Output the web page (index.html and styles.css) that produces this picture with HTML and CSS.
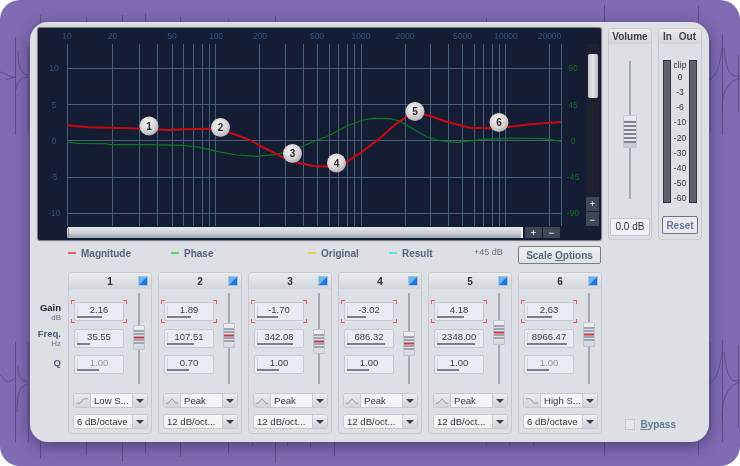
FILE: index.html
```html
<!DOCTYPE html>
<html lang="en">
<head>
<meta charset="utf-8">
<title>Parametric EQ</title>
<link rel="stylesheet" href="styles.css">
</head>
<body>
<div class="stage">
  <svg class="wave" viewBox="0 0 740 466" aria-hidden="true">
    <g fill="none" stroke="#55487f" stroke-width=".8">
      <path d="M15.500 37V135M28.500 47V135M0 72C6 73 10 78 15 77M5 80L15 77M18 50C18 66 20 74 28 75M16 90C17 82 20 78 28 77"/>
      <path d="M15.500 342V442M28.500 342V442M0 375C4 378 6 386 15 378M18 366C18 376 20 380 28 382M17 412C17 392 20 386 28 384"/>
      <path d="M710.500 40V132M722.500 35V135M738.500 55V112M709 80C716 76 719 70 722 48M724 48C726 70 730 78 740 76M722 112C722 90 728 82 740 78"/>
      <path d="M710.500 342V430M722.500 340V442M738.500 345V428M709 383C716 380 719 372 722 352M724 352C726 372 730 381 735 381C737 381 738 380 740 380M722 420C722 396 728 386 740 382"/>
      <path d="M40.500 15V22M86.500 17V22M122.500 15V22M145.500 13V22M180.500 17V22M228.500 19V22M275.500 16V22M486.500 18V22M604.500 5V22M698.500 6V22"/>
      <path d="M40.500 442V458M86.500 442V455M122.500 442V461M145.500 442V453M180.500 442V457M228.500 442V453M252.500 442V446M275.500 442V463M287.500 442V446M310.500 442V447M334.500 442V456M486.500 442V445M509.500 442V445M533.500 442V445M604.500 442V456M698.500 442V455"/>
    </g>
  </svg>
  <main class="panel">
    <div class="top">
      <svg class="graph" viewBox="38 28 563 212" role="img">
        <g class="grid">
          <path d="M67.500 44V226M112.500 44V226M139.500 44V226M157.500 44V226M172.500 44V226M183.500 44V226M193.500 44V226M202.500 44V226M209.500 44V226M215.500 44V226M259.500 44V226M285.500 44V226M303.500 44V226M317.500 44V226M329.500 44V226M338.500 44V226M347.500 44V226M354.500 44V226M361.500 44V226M405.500 44V226M430.500 44V226M448.500 44V226M462.500 44V226M474.500 44V226M483.500 44V226M492.500 44V226M499.500 44V226M505.500 44V226M549.500 44V226M561.500 44V226"/>
          <path d="M67 68.500H561M67 104.500H561M67 140.500H561M67 177.500H561M67 213.500H561"/>
        </g>
        <g class="axis-top">
          <text x="67" y="39">10</text><text x="112.500" y="39">20</text><text x="172" y="39">50</text><text x="216" y="39">100</text><text x="260" y="39">200</text><text x="317" y="39">500</text><text x="361" y="39">1000</text><text x="405" y="39">2000</text><text x="462.500" y="39">5000</text><text x="506" y="39">10000</text><text x="549.500" y="39">20000</text>
        </g>
        <g class="axis-left">
          <text x="54" y="71">10</text><text x="54" y="108">5</text><text x="54" y="144">0</text><text x="54" y="180">-5</text><text x="54" y="216">-10</text>
        </g>
        <g class="axis-right">
          <text x="573" y="71">90</text><text x="573" y="108">45</text><text x="573" y="144">0</text><text x="573" y="180">-45</text><text x="573" y="216">-90</text>
        </g>
        <path class="phase" d="M67.300 142L76.700 143.300L105 143.700L110 144.700L150 144.700L183.300 145.300L200 147.300L216.700 151.300L236.700 155L256.700 156.300L276.700 154.300L293.300 150L313.300 141.700L330 135L346.700 126L363.300 120L373.300 118.300L390 118.700L400 121L410 127.300L426.700 136.700L440 140.700L456.700 142.300L483.300 139.300L513.300 138L543.300 138.700L561.300 141.300"/>
        <path class="magnitude" d="M67.300 125.300L88.300 127.300L110 127.700L130 128.300L149.300 129.300L170 130L183.300 129.300L210 128.700L230 132.700L250 140L256.700 144L283.300 157.300L300 163.300L313.300 166L330 166.700L336.700 163.300L346.700 161.700L360 153.300L376.700 140.700L396.700 123.300L415 111.700L430 116L446.700 121.700L470 127.700L490 128.300L510 126.700L530 124.300L561.300 122"/>
        <defs>
          <radialGradient id="ball" cx=".42" cy=".34" r=".75">
            <stop offset="0" stop-color="#f4f2f2"/><stop offset=".5" stop-color="#dcd8d9"/><stop offset=".8" stop-color="#c2bcbe"/><stop offset="1" stop-color="#8e888c"/>
          </radialGradient>
          <linearGradient id="thumbH" x1="0" y1="0" x2="0" y2="1">
            <stop offset="0" stop-color="#e6e8eb"/><stop offset=".5" stop-color="#cdd1d6"/><stop offset="1" stop-color="#9ea3ab"/>
          </linearGradient>
          <linearGradient id="thumbV" x1="0" y1="0" x2="1" y2="0">
            <stop offset="0" stop-color="#c6cad0"/><stop offset=".5" stop-color="#e4e6ea"/><stop offset="1" stop-color="#b4b8be"/>
          </linearGradient>
        </defs>
        <g class="nodes">
          <circle cx="149" cy="126" r="9.500"/><text x="149" y="129.500">1</text>
          <circle cx="220.500" cy="127.500" r="9.500"/><text x="220.500" y="131">2</text>
          <circle cx="292.500" cy="153.500" r="9.500"/><text x="292.500" y="157">3</text>
          <circle cx="336.500" cy="163" r="9.500"/><text x="336.500" y="166.500">4</text>
          <circle cx="415" cy="111.500" r="9.500"/><text x="415" y="115">5</text>
          <circle cx="499" cy="122.500" r="9.500"/><text x="499" y="126">6</text>
        </g>
        <rect x="586" y="44" width="13" height="182" fill="#1e2230"/>
        <rect x="588" y="54" width="10" height="44" rx="2" fill="url(#thumbV)"/>
        <rect x="67" y="227" width="456" height="11" rx="1.500" fill="url(#thumbH)"/>
        <rect x="68" y="228" width="1" height="9" fill="#8a8f98"/>
        <rect x="521" y="227" width="2" height="11" fill="#eef0f2"/>
        <g class="mini">
          <rect x="525" y="227" width="17" height="11"/><rect x="543" y="227" width="17" height="11"/>
          <rect x="586" y="197" width="13" height="14"/><rect x="586" y="212" width="13" height="14"/>
          <text x="533.500" y="236">+</text><text x="551.500" y="236">−</text>
          <text x="592.500" y="207">+</text><text x="592.500" y="222.500">−</text>
        </g>
      </svg>
      <section class="side volume">
        <h2 class="side-head">Volume</h2>
        <div class="vol-slider"><span class="vol-thumb"></span></div>
        <div class="vol-value">0.0 dB</div>
      </section>
      <section class="side meters">
        <h2 class="side-head meter-head"><span>In</span><span>Out</span></h2>
        <div class="meter-body">
          <span class="meter"></span>
          <div class="ticks"><span>clip</span><span>0</span><span>-3</span><span>-6</span><span>-10</span><span>-20</span><span>-30</span><span>-40</span><span>-50</span><span>-60</span></div>
          <span class="meter"></span>
        </div>
        <button class="reset">Reset</button>
      </section>
    </div>

    <div class="legend">
      <span class="key key-mag">Magnitude</span>
      <span class="key key-pha">Phase</span>
      <span class="key key-ori">Original</span>
      <span class="key key-res">Result</span>
      <span class="db">+45 dB</span>
      <button class="scale">Scale <u>O</u>ptions</button>
    </div>

    <div class="bottom">
      <div class="labels">
        <b class="lab-gain">Gain</b><small>dB</small>
        <b class="lab-freq">Freq.</b><small>Hz</small>
        <b class="lab-q">Q</b>
      </div>
      <div class="bands">
        <article class="band">
          <header class="band-head"><span>1</span><i class="led"></i></header>
          <div class="band-body">
            <div class="fields">
              <div class="field gain"><span>2.16</span><i style="width:25px"></i></div>
              <div class="field"><span>35.55</span><i style="width:13px"></i></div>
              <div class="field off"><span>1.00</span><i style="width:22px"></i></div>
            </div>
            <div class="slider"><span class="thumb" style="margin-top:32px"></span></div>
          </div>
          <div class="drop"><span class="shape"><svg viewBox="0 0 16 10"><path d="M2 8H6L10 3H15"/></svg></span><span class="val">Low S...</span><span class="arrow"></span></div>
          <div class="drop"><span class="val">6 dB/octave</span><span class="arrow"></span></div>
        </article>
        <article class="band">
          <header class="band-head"><span>2</span><i class="led"></i></header>
          <div class="band-body">
            <div class="fields">
              <div class="field gain"><span>1.89</span><i style="width:24px"></i></div>
              <div class="field"><span>107.51</span><i style="width:27px"></i></div>
              <div class="field"><span>0.70</span><i style="width:22px"></i></div>
            </div>
            <div class="slider"><span class="thumb" style="margin-top:30px"></span></div>
          </div>
          <div class="drop"><span class="shape"><svg viewBox="0 0 16 10"><path d="M1 8H4L8 3L12 8H15"/></svg></span><span class="val">Peak</span><span class="arrow"></span></div>
          <div class="drop"><span class="val">12 dB/oct...</span><span class="arrow"></span></div>
        </article>
        <article class="band">
          <header class="band-head"><span>3</span><i class="led"></i></header>
          <div class="band-body">
            <div class="fields">
              <div class="field gain"><span>-1.70</span><i style="width:21px"></i></div>
              <div class="field"><span>342.08</span><i style="width:36px"></i></div>
              <div class="field"><span>1.00</span><i style="width:22px"></i></div>
            </div>
            <div class="slider"><span class="thumb" style="margin-top:36px"></span></div>
          </div>
          <div class="drop"><span class="shape"><svg viewBox="0 0 16 10"><path d="M1 8H4L8 3L12 8H15"/></svg></span><span class="val">Peak</span><span class="arrow"></span></div>
          <div class="drop"><span class="val">12 dB/oct...</span><span class="arrow"></span></div>
        </article>
        <article class="band">
          <header class="band-head"><span>4</span><i class="led"></i></header>
          <div class="band-body">
            <div class="fields">
              <div class="field gain"><span>-3.02</span><i style="width:19px"></i></div>
              <div class="field"><span>686.32</span><i style="width:38px"></i></div>
              <div class="field"><span>1.00</span><i style="width:22px"></i></div>
            </div>
            <div class="slider"><span class="thumb" style="margin-top:38px"></span></div>
          </div>
          <div class="drop"><span class="shape"><svg viewBox="0 0 16 10"><path d="M1 8H4L8 3L12 8H15"/></svg></span><span class="val">Peak</span><span class="arrow"></span></div>
          <div class="drop"><span class="val">12 dB/oct...</span><span class="arrow"></span></div>
        </article>
        <article class="band">
          <header class="band-head"><span>5</span><i class="led"></i></header>
          <div class="band-body">
            <div class="fields">
              <div class="field gain"><span>4.18</span><i style="width:27px"></i></div>
              <div class="field"><span>2348.00</span><i style="width:38px"></i></div>
              <div class="field"><span>1.00</span><i style="width:22px"></i></div>
            </div>
            <div class="slider"><span class="thumb" style="margin-top:27px"></span></div>
          </div>
          <div class="drop"><span class="shape"><svg viewBox="0 0 16 10"><path d="M1 8H4L8 3L12 8H15"/></svg></span><span class="val">Peak</span><span class="arrow"></span></div>
          <div class="drop"><span class="val">12 dB/oct...</span><span class="arrow"></span></div>
        </article>
        <article class="band">
          <header class="band-head"><span>6</span><i class="led"></i></header>
          <div class="band-body">
            <div class="fields">
              <div class="field gain"><span>2.63</span><i style="width:25px"></i></div>
              <div class="field"><span>8966.47</span><i style="width:40px"></i></div>
              <div class="field off"><span>1.00</span><i style="width:22px"></i></div>
            </div>
            <div class="slider"><span class="thumb" style="margin-top:29px"></span></div>
          </div>
          <div class="drop"><span class="shape"><svg viewBox="0 0 16 10"><path d="M1 3H6L10 8H15"/></svg></span><span class="val">High S...</span><span class="arrow"></span></div>
          <div class="drop"><span class="val">6 dB/octave</span><span class="arrow"></span></div>
        </article>
      </div>
      <label class="bypass"><span class="check"></span><span><u>B</u>ypass</span></label>
    </div>
  </main>
</div>
</body>
</html>
```
FILE: styles.css
```css
* { box-sizing: border-box; }
html, body { margin: 0; padding: 0; background: #fff; }
body { width: 740px; height: 466px; overflow: hidden; font-family: "Liberation Sans", Arial, sans-serif; }
.stage { position: relative; width: 740px; height: 466px; padding: 22px 31px 24px 30px; background: #7f6cb2; border-radius: 20px; filter: blur(.35px); }
.wave { position: absolute; left: 0; top: 0; width: 740px; height: 466px; }
.panel { position: relative; width: 679px; height: 420px; padding: 6px 7px 0 8px; background: #dcdfe4; border-radius: 18px; box-shadow: 0 4px 16px rgba(45,35,85,.6); }

.top { display: flex; align-items: flex-start; }
.graph { display: block; width: 563px; height: 212px; background: #141d33; border-radius: 2px; box-shadow: 0 0 1px 1px #6d717a; flex: none; }
.grid path { stroke: #46607c; stroke-width: 1; fill: none; }
.axis-top text, .axis-left text, .axis-right text { font-size: 8.500px; }
.axis-top text { fill: #34527a; text-anchor: middle; }
.axis-left text { fill: #34527a; text-anchor: middle; }
.axis-right text { fill: #0e6e1e; text-anchor: middle; }
.phase { fill: none; stroke: #0a7a1e; stroke-width: 1.200; }
.magnitude { fill: none; stroke: #c80a10; stroke-width: 2; stroke-linejoin: round; }
.nodes circle { fill: url(#ball); }
.nodes text { font-size: 10px; font-weight: 700; fill: #2a2a2e; text-anchor: middle; }
.mini rect { fill: #3f4658; }
.mini text { font-size: 9px; font-weight: 700; fill: #d8dbe0; text-anchor: middle; }

.side { flex: none; width: 44px; height: 212px; margin-left: 7px; border: 1px solid #c6cad0; border-radius: 4px; display: flex; flex-direction: column; align-items: center; }
.meters { margin-left: 6px; }
.side-head { width: 100%; height: 15px; margin: 0; background: linear-gradient(#e9ebee, #d2d5da); border-radius: 3px 3px 0 0; font-size: 10px; line-height: 15px; font-weight: 700; color: #3c3f46; text-align: center; }
.meter-head { display: flex; justify-content: space-between; padding: 0 5px 0 4px; }
.vol-slider { position: relative; width: 2px; height: 138px; margin-top: 17px; background: #a4a9b3; }
.vol-thumb { position: absolute; left: -6px; top: 54px; width: 14px; height: 33px; border: 1px solid #c2c6ce; border-radius: 1px; background: repeating-linear-gradient(#7b808c 0 2px, #e6e8ec 2px 4px) 0 5px / 100% 22px no-repeat, linear-gradient(#e7e9ed, #c4c8d0); }
.vol-value { width: 40px; height: 18px; margin-top: 19px; background: #eff1f4; border: 1px solid #c6cad0; border-radius: 2px; font-size: 10px; line-height: 16px; color: #333; text-align: center; }
.meter-body { display: flex; justify-content: space-between; width: 34px; height: 143px; margin-top: 16px; }
.meter { width: 8px; height: 143px; background: #5c616c; border: 1px solid #2e3340; }
.ticks { display: flex; flex-direction: column; justify-content: space-between; align-items: center; height: 143px; font-size: 8.500px; line-height: 10px; color: #333; }
.ticks span:first-child { margin-bottom: -3px; }
.reset { width: 36px; height: 18px; margin-top: 13px; padding: 0; background: #e9ebf0; border: 1px solid #6f7581; border-radius: 2px; font: 700 10px "Liberation Sans", Arial, sans-serif; color: #6478a0; }

.legend { position: relative; display: flex; align-items: flex-start; height: 18px; margin-top: 6px; padding-left: 30px; font-size: 10px; font-weight: 700; color: #56657f; }
.key { display: flex; align-items: center; gap: 5px; height: 14px; }
.key::before { content: ""; width: 8px; height: 2px; }
.key-mag { width: 103px; }
.key-mag::before { background: #e86464; }
.key-pha { width: 137px; }
.key-pha::before { background: #64d464; }
.key-ori { width: 81px; }
.key-ori::before { background: #e8d060; }
.key-res { width: 85px; }
.key-res::before { background: #60e4e4; }
.db { width: 44px; height: 12px; line-height: 12px; font-size: 9px; font-weight: 400; color: #6c7484; }
.scale { width: 83px; height: 18px; padding: 0; background: linear-gradient(#eef0f3, #dfe2e7); border: 1px solid #767c88; border-radius: 2px; font: 700 10px "Liberation Sans", Arial, sans-serif; color: #5a6a84; }

.bottom { position: relative; display: flex; margin-top: 8px; }
.labels { display: flex; flex-direction: column; align-items: flex-end; width: 23px; padding-top: 30px; box-sizing: content-box; }
.labels b { font-size: 9.500px; line-height: 11px; }
.labels small { font-size: 8px; line-height: 10px; color: #6c7484; }
.lab-gain { color: #1c2030; }
.lab-freq, .lab-q { color: #4c5a74; }
.lab-freq { margin-top: 5px; }
.lab-q { margin-top: 8px; }
.bands { display: flex; gap: 6px; margin-left: 7px; }
.band { width: 84px; height: 162px; border: 1px solid #c6cad0; border-radius: 4px; }
.band-head { position: relative; height: 16px; background: linear-gradient(#e9ebee, #d2d5da); border-radius: 3px 3px 0 0; font-size: 10px; font-weight: 700; line-height: 17px; color: #2e3038; text-align: center; }
.led { position: absolute; right: 3px; top: 3px; width: 10px; height: 10px; background: linear-gradient(135deg, #6db4f4 0 45%, #1e74e0 55%); border: 1px solid #a8c0dc; }
.band-body { display: flex; height: 104px; }
.fields { display: flex; flex-direction: column; width: 64px; padding: 13px 0 0 5px; }
.field { position: relative; width: 50px; height: 19px; margin-bottom: 7.500px; background: #e8ebf2; border: 1px solid #c4c8d0; border-radius: 2px; font-size: 9.500px; line-height: 13px; color: #3a3f4a; text-align: center; }
.field::after { content: ""; position: absolute; left: 2px; top: 2px; bottom: 4px; width: 1px; background: #cdd1da; }
.field i { position: absolute; left: 2px; bottom: 2px; height: 2px; background: #7a7e8c; }
.field.off span { color: #94989f; }
.gain::before { content: ""; position: absolute; left: -4px; right: -4px; top: -3px; bottom: -3px; background:
  linear-gradient(#ee5a5a, #ee5a5a) 0 0 / 4px 1px, linear-gradient(#ee5a5a, #ee5a5a) 0 0 / 1px 4px,
  linear-gradient(#ee5a5a, #ee5a5a) 100% 0 / 4px 1px, linear-gradient(#ee5a5a, #ee5a5a) 100% 0 / 1px 4px,
  linear-gradient(#ee5a5a, #ee5a5a) 0 100% / 4px 1px, linear-gradient(#ee5a5a, #ee5a5a) 0 100% / 1px 4px,
  linear-gradient(#ee5a5a, #ee5a5a) 100% 100% / 4px 1px, linear-gradient(#ee5a5a, #ee5a5a) 100% 100% / 1px 4px;
  background-repeat: no-repeat; }
.slider { width: 2px; height: 91px; margin: 4px 0 0 5px; background: #a4a9b3; display: flex; justify-content: center; }
.thumb { flex: none; width: 12px; height: 25px; border: 1px solid #c0c4cc; border-radius: 1px; background: linear-gradient(#e02e2e, #e02e2e) 0 11px / 100% 1.500px no-repeat, repeating-linear-gradient(#a0a4b2 0 2px, #dcdee4 2px 3px) 0 4px / 100% 15px no-repeat, linear-gradient(#eceef1, #d4d7dd); }
.drop { display: flex; width: 75px; height: 15px; margin: 0 0 6px 4px; background: #f3f4f6; border: 1px solid #c6cad0; border-radius: 3px; font-size: 9.600px; line-height: 13px; color: #33363e; overflow: hidden; }
.shape { width: 17px; flex: none; background: linear-gradient(#e8eaee, #d2d5da); border-right: 1px solid #c6cad0; display: flex; align-items: center; justify-content: center; }
.shape svg { width: 14px; height: 9px; }
.shape path { fill: none; stroke: #8d929c; stroke-width: 1; }
.val { flex: 1; padding-left: 3px; white-space: nowrap; }
.arrow { position: relative; flex: none; width: 15px; background: linear-gradient(#eceef1, #cfd2d8); border-left: 1px solid #c6cad0; }
.arrow::after { content: ""; position: absolute; left: 3px; top: 5px; border: 4px solid transparent; border-top: 4px solid #3c404a; border-bottom: 0; }

.bypass { position: absolute; right: 26px; bottom: 4px; display: flex; align-items: center; gap: 5px; font-size: 10px; font-weight: 700; color: #6a7a94; }
.check { width: 10px; height: 11px; background: #e4e6ea; border: 1px solid #c6cad0; }
```
